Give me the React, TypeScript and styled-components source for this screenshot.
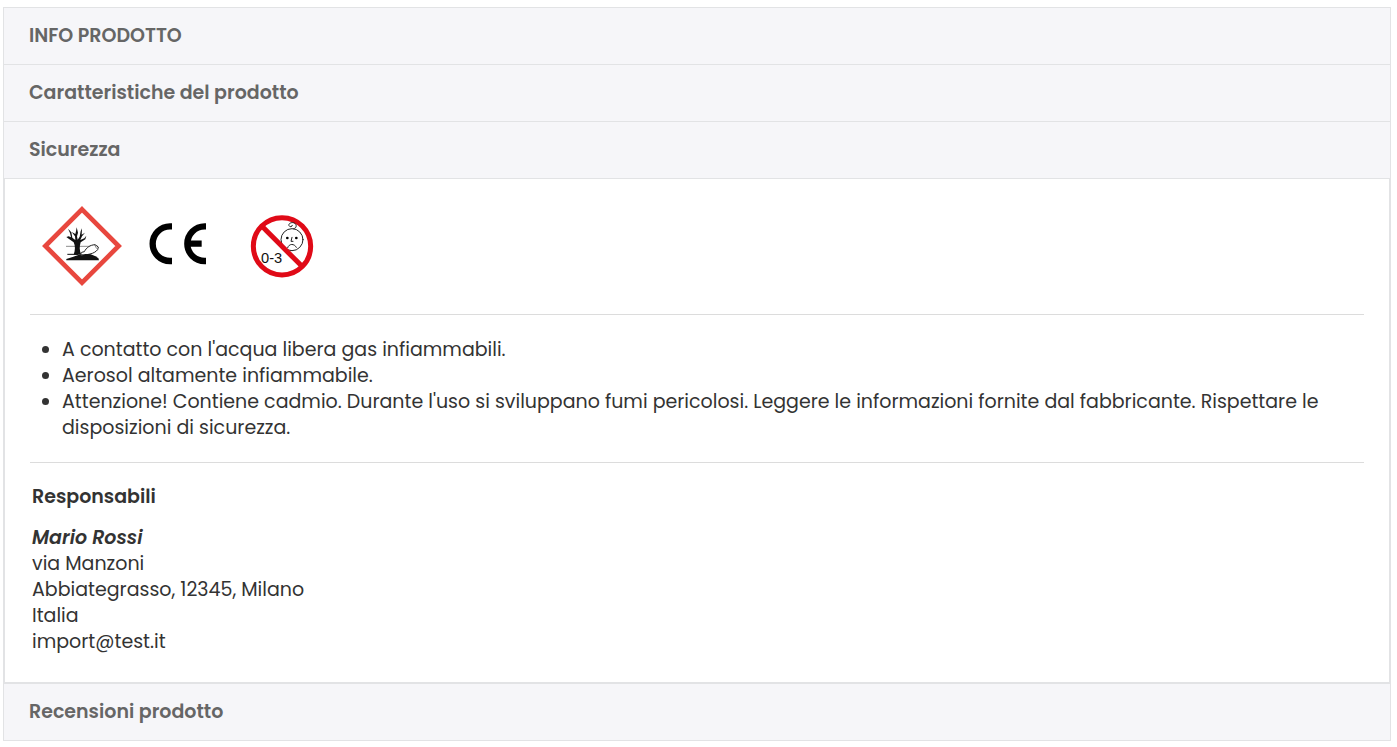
import React, { useState } from 'react';
import styled, { createGlobalStyle } from 'styled-components';

const GlobalStyle = createGlobalStyle`
  *, *::before, *::after { box-sizing: border-box; }
  body {
    margin: 0;
    background: #fff;
    color: #333;
    font-family: Poppins, Inter, sans-serif;
    font-size: 19px;
    line-height: 26px;
  }
`;

const Accordion = styled.main`
  margin: 7px 6px 6px 3px;
  border: 1px solid #e2e3e5;
`;

const Item = styled.section`
  & + & { border-top: 1px solid #e2e3e5; }
`;

const ItemTitle = styled.h2`
  margin: 0;
  font-size: inherit;
`;

const Toggle = styled.button`
  display: block;
  width: 100%;
  padding: 15px 25px;
  border: 0;
  background: #f6f6f9;
  color: #666;
  font: inherit;
  font-weight: 600;
  text-align: left;
  cursor: pointer;
`;

const Panel = styled.div<{ $filled: boolean }>`
  padding: ${(p) => (p.$filled ? '17px 25px 27px' : '0 25px')};
  border: 1px solid #e2e3e5;
`;

const Signs = styled.div`
  display: flex;
  flex-wrap: wrap;
  padding: 0 2px;
`;

const Sign = styled.svg`
  display: block;
  width: 100px;
  height: 100px;
`;

const Divider = styled.hr<{ $space: number }>`
  margin: ${(p) => p.$space}px 0 0;
  border: 0;
  border-top: 1px solid #dcdcdc;
`;

const Warnings = styled.ul`
  margin: 22px 0 0;
  padding: 0 0 0 32px;
`;

const Contact = styled.div`
  padding: 21px 2px 0;
`;

const ContactTitle = styled.h3`
  margin: 0 0 15px;
  font-size: inherit;
  font-weight: 600;
`;

const Address = styled.address`
  font-style: normal;
  span { display: block; }
`;

const Name = styled.strong`
  display: block;
  font-style: italic;
  font-weight: 600;
`;

const EnvironmentSign = () => (
  <Sign viewBox="-12 -12 300 300" role="img" aria-label="Pericoloso per l'ambiente">
    <path d="M138 28 248 138 138 248 28 138Z" fill="#fff" stroke="#e8473e" strokeWidth="14" />
    <path d="M90 139H186" stroke="#555" strokeWidth="2" />
    <path
      d="M113 164C118 151 118 137 113 127L98 116 91 111 98 109 105 112 102 99 96 86 106 97 109 113 118 120 117 109 107 96 118 102 120 94 122 82 126 98 123 109 125 119 131 110 134 94 138 85 137 104 147 98 138 109 133 120 145 115 151 107 148 118 134 127C130 140 130 151 136 164Z"
      fill="#111"
    />
    <path d="M91 181V177L112 170 129 164 145 167 159 163 187 174 189 181Z" fill="#111" />
    <path d="M94 163H126" stroke="#111" strokeWidth="3" />
    <path
      d="M133 164 137 157 145 155C151 143 162 135 177 134L187 141 185 149C180 155 172 160 162 162L148 165Z"
      fill="#fff"
      stroke="#222"
      strokeWidth="3"
    />
    <path d="M130 170 148 162 164 163 184 171 178 178H130Z" fill="#111" />
    <path d="M176 135 182 146" fill="none" stroke="#555" strokeWidth="2" />
  </Sign>
);

const CeSign = () => (
  <Sign viewBox="-24 -42 300 300" role="img" aria-label="Marcatura CE">
    <g fill="none" stroke="#000" strokeWidth="19">
      <path d="M96 49H90A52 52 0 0 0 90 153H96" />
      <path d="M198 49H194A52 52 0 0 0 194 153H198M144 101H185" />
    </g>
  </Sign>
);

const AgeSign = () => (
  <Sign viewBox="-36 -36 300 300" role="img" aria-label="Non adatto a bambini di 0-3 anni">
    <circle cx="114" cy="115" r="86" fill="none" stroke="#e00a17" strokeWidth="15" />
    <g fill="none" stroke="#222" strokeWidth="3" strokeLinecap="round">
      <circle cx="144" cy="95" r="33" />
      <path d="M149 62C159 61 159 49 151 45C143 41 132 47 135 53C137 58 145 57 145 52" />
      <path d="M144 88 141 100H147M131 119C135 106 151 106 157 118" />
    </g>
    <circle cx="130" cy="90" r="4" />
    <circle cx="157" cy="90" r="4" />
    <path d="M54 55 174 175" stroke="#e00a17" strokeWidth="15" />
    <text x="51" y="164" fontFamily="Liberation Sans, sans-serif" fontSize="44" fill="#111">0-3</text>
  </Sign>
);

const warnings = [
  "A contatto con l'acqua libera gas infiammabili.",
  'Aerosol altamente infiammabile.',
  "Attenzione! Contiene cadmio. Durante l'uso si sviluppano fumi pericolosi. Leggere le informazioni fornite dal fabbricante. Rispettare le disposizioni di sicurezza.",
];

const Safety = () => (
  <>
    <Signs>
      <EnvironmentSign />
      <CeSign />
      <AgeSign />
    </Signs>
    <Divider $space={18} />
    <Warnings>
      {warnings.map((text) => (
        <li key={text}>{text}</li>
      ))}
    </Warnings>
    <Divider $space={21} />
    <Contact>
      <ContactTitle>Responsabili</ContactTitle>
      <Address>
        <Name>Mario Rossi</Name>
        <span>via Manzoni</span>
        <span>Abbiategrasso, 12345, Milano</span>
        <span>Italia</span>
        <span>import@test.it</span>
      </Address>
    </Contact>
  </>
);

const sections = [
  { id: 'info', title: 'INFO PRODOTTO', content: null },
  { id: 'caratteristiche', title: 'Caratteristiche del prodotto', content: null },
  { id: 'sicurezza', title: 'Sicurezza', content: <Safety /> },
  { id: 'recensioni', title: 'Recensioni prodotto', content: null },
];

export default function App() {
  const [open, setOpen] = useState('sicurezza');
  return (
    <>
      <GlobalStyle />
      <Accordion>
        {sections.map(({ id, title, content }) => (
          <Item key={id}>
            <ItemTitle>
              <Toggle
                type="button"
                id={`${id}-toggle`}
                aria-expanded={open === id}
                onClick={() => setOpen(open === id ? '' : id)}
              >
                {title}
              </Toggle>
            </ItemTitle>
            {open === id && (
              <Panel $filled={content !== null} role="region" aria-labelledby={`${id}-toggle`}>
                {content}
              </Panel>
            )}
          </Item>
        ))}
      </Accordion>
    </>
  );
}
